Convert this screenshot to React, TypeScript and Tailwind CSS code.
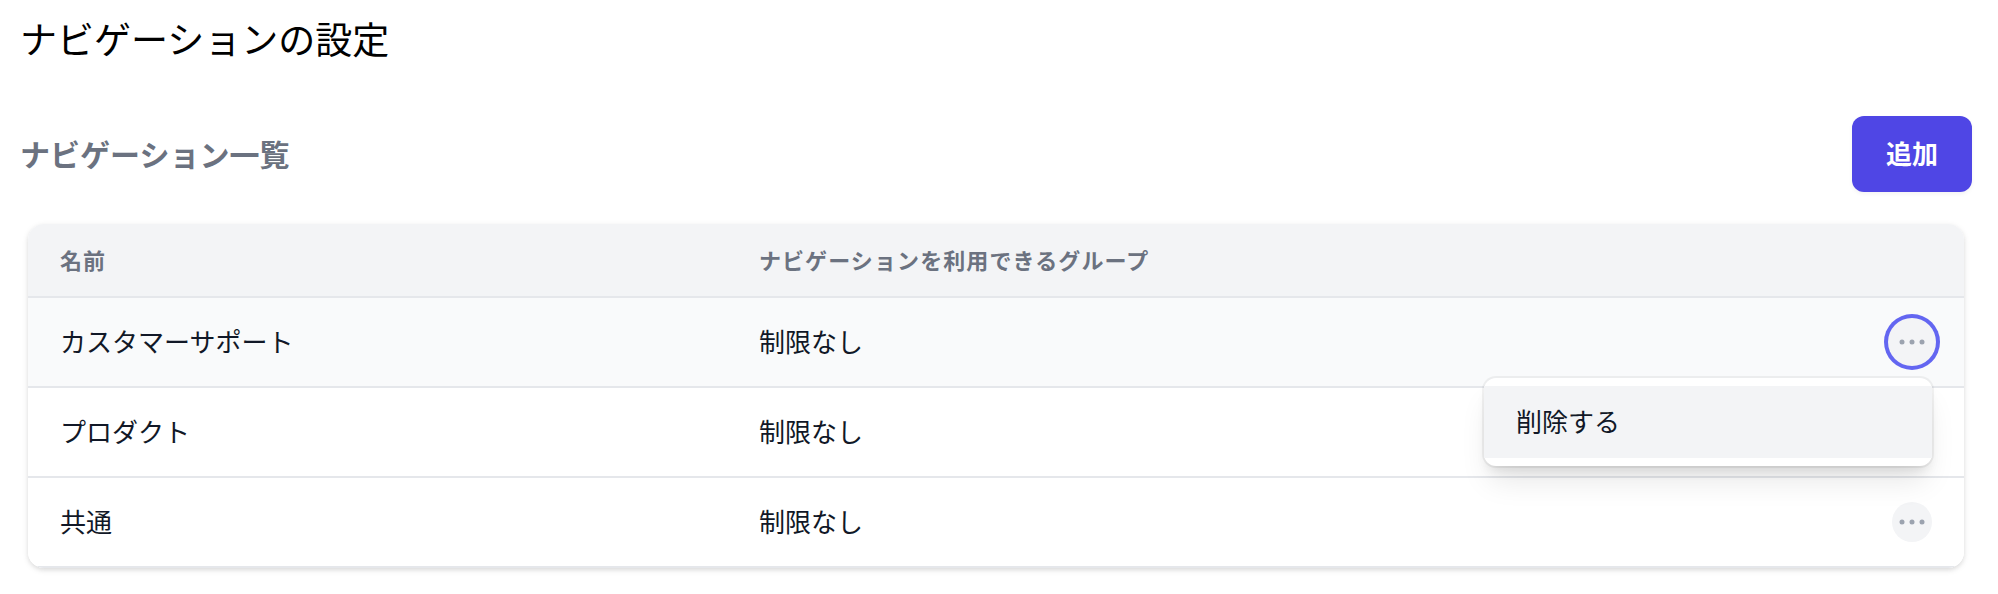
import { useState } from 'react';

interface Navigation {
  id: number;
  name: string;
  group: string;
}

const navigations: Navigation[] = [
  { id: 1, name: 'カスタマーサポート', group: '制限なし' },
  { id: 2, name: 'プロダクト', group: '制限なし' },
  { id: 3, name: '共通', group: '制限なし' },
];

function DotsIcon() {
  return (
    <svg viewBox="0 0 40 40" className="h-10 w-10" fill="currentColor" aria-hidden="true">
      <circle cx="10" cy="20" r="2.5" />
      <circle cx="20" cy="20" r="2.5" />
      <circle cx="30" cy="20" r="2.5" />
    </svg>
  );
}

interface RowMenuProps {
  label: string;
  open: boolean;
  onToggle: () => void;
}

function RowMenu({ label, open, onToggle }: RowMenuProps) {
  return (
    <div className="relative ml-auto h-10 w-10">
      <button
        type="button"
        aria-label={`${label}のメニュー`}
        aria-expanded={open}
        onClick={onToggle}
        className={`block h-10 w-10 rounded-full bg-gray-100 text-[#9ca3af] outline-none ${
          open ? 'ring-4 ring-[#6366f1] ring-offset-4 ring-offset-gray-100' : ''
        }`}
      >
        <DotsIcon />
      </button>
      {open && (
        <div
          role="menu"
          className="absolute top-14 right-0 z-10 w-[448px] rounded-xl bg-white py-2 shadow-[0_0_0_2px_rgba(0,0,0,0.05),0_20px_30px_-6px_rgba(0,0,0,0.1),0_8px_12px_-4px_rgba(0,0,0,0.1)]"
        >
          <button
            type="button"
            role="menuitem"
            className="block w-full bg-gray-100 px-8 pt-[15px] pb-[17px] text-left text-[26px] leading-10 text-[#111827]"
          >
            削除する
          </button>
        </div>
      )}
    </div>
  );
}

export default function App() {
  const [openId, setOpenId] = useState<number | null>(1);

  return (
    <main className="min-h-screen bg-white pt-3 pr-[26px] pb-6 pl-5 font-['Noto_Sans_CJK_JP',sans-serif]">
      <h1 className="text-[37px] leading-[52px] text-black">ナビゲーションの設定</h1>

      <div className="mt-[52px] flex items-center justify-between">
        <h2 className="pb-[3px] text-[30px] leading-10 font-bold text-[#6b7280]">ナビゲーション一覧</h2>
        <button
          type="button"
          className="rounded-xl bg-[#4f46e5] px-[34px] pt-[17px] pb-[19px] text-[26px] leading-10 font-bold text-white shadow-[0_2px_4px_rgba(0,0,0,0.05)]"
        >
          追加
        </button>
      </div>

      <div className="mx-2 mt-8 overflow-hidden rounded-2xl shadow-[0_2px_6px_rgba(0,0,0,0.1),0_2px_4px_rgba(0,0,0,0.06)]">
        <table className="w-full table-fixed border-separate border-spacing-0 text-left">
          <thead className="bg-gray-100 text-[22px] leading-10 tracking-wider text-[#6b7280]">
            <tr>
              <th scope="col" className="w-[36.1%] border-b-2 border-gray-200 px-8 pt-[15px] pb-[17px] font-bold">
                名前
              </th>
              <th scope="col" className="border-b-2 border-gray-200 px-8 pt-[15px] pb-[17px] font-bold">
                ナビゲーションを利用できるグループ
              </th>
              <th scope="col" aria-label="操作" className="w-32 border-b-2 border-gray-200" />
            </tr>
          </thead>
          <tbody className="text-[26px] leading-10 text-[#111827]">
            {navigations.map((nav) => (
              <tr key={nav.id} className={openId === nav.id ? 'bg-gray-50' : 'bg-white'}>
                <td className="border-b-2 border-gray-200 px-8 pt-[23px] pb-[25px]">{nav.name}</td>
                <td className="border-b-2 border-gray-200 px-8 pt-[23px] pb-[25px]">{nav.group}</td>
                <td className="border-b-2 border-gray-200 px-8 py-6">
                  <RowMenu
                    label={nav.name}
                    open={openId === nav.id}
                    onToggle={() => setOpenId(openId === nav.id ? null : nav.id)}
                  />
                </td>
              </tr>
            ))}
          </tbody>
        </table>
      </div>
    </main>
  );
}
